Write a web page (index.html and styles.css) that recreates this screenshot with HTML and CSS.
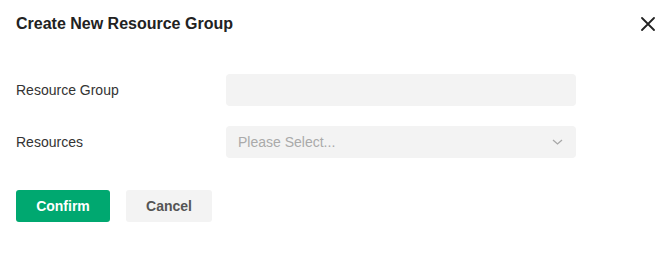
FILE: index.html
```html
<!DOCTYPE html>
<html>
<head>
<meta charset="utf-8">
<link rel="stylesheet" href="styles.css">
</head>
<body>
<div class="dialog">
  <div class="header">
    <h1 class="title">Create New Resource Group</h1>
    <button class="close" aria-label="Close">
      <svg width="14" height="14" viewBox="0 0 14 14"><path d="M1 1L13 13M13 1L1 13" stroke="#222" stroke-width="1.8" stroke-linecap="round" fill="none"/></svg>
    </button>
  </div>
  <div class="form">
    <div class="row">
      <label class="label">Resource Group</label>
      <div class="field"></div>
    </div>
    <div class="row">
      <label class="label">Resources</label>
      <div class="field select">
        <span class="placeholder">Please Select...</span>
        <svg width="11" height="6" viewBox="0 0 11 6"><path d="M1 1L5.5 5L10 1" stroke="#a8a8a8" stroke-width="1.3" fill="none"/></svg>
      </div>
    </div>
  </div>
  <div class="actions">
    <button class="btn primary">Confirm</button>
    <button class="btn secondary">Cancel</button>
  </div>
</div>
</body>
</html>
```
FILE: styles.css
```css
html, body { margin: 0; padding: 0; background: #fff; }
body { font-family: "Liberation Sans", Arial, sans-serif; color: #333; }
.dialog { width: 660px; height: 254px; box-sizing: border-box; padding: 0 16px; }
.header { display: flex; align-items: center; justify-content: space-between; height: 48px; }
.title { margin: 0; font-size: 16px; font-weight: bold; color: #222; }
.close { border: 0; background: none; padding: 0; width: 14px; height: 14px; margin-right: -11px; display: flex; cursor: pointer; }
.form { padding-top: 26px; display: flex; flex-direction: column; gap: 20px; }
.row { display: flex; align-items: center; height: 32px; }
.label { width: 210px; font-size: 14px; color: #333; }
.field { width: 350px; height: 32px; background: #f3f3f3; border-radius: 4px; box-sizing: border-box; }
.select { display: flex; align-items: center; justify-content: space-between; padding: 0 13px 0 12px; }
.placeholder { font-size: 14px; color: #aaa; }
.actions { display: flex; gap: 16px; padding-top: 32px; }
.btn { height: 32px; border: 0; border-radius: 3px; font-family: "Liberation Sans", Arial, sans-serif; font-size: 14px; font-weight: bold; padding: 0; }
.primary { width: 94px; background: #00a870; color: #fff; }
.secondary { width: 86px; background: #f3f3f3; color: #555; }
```
